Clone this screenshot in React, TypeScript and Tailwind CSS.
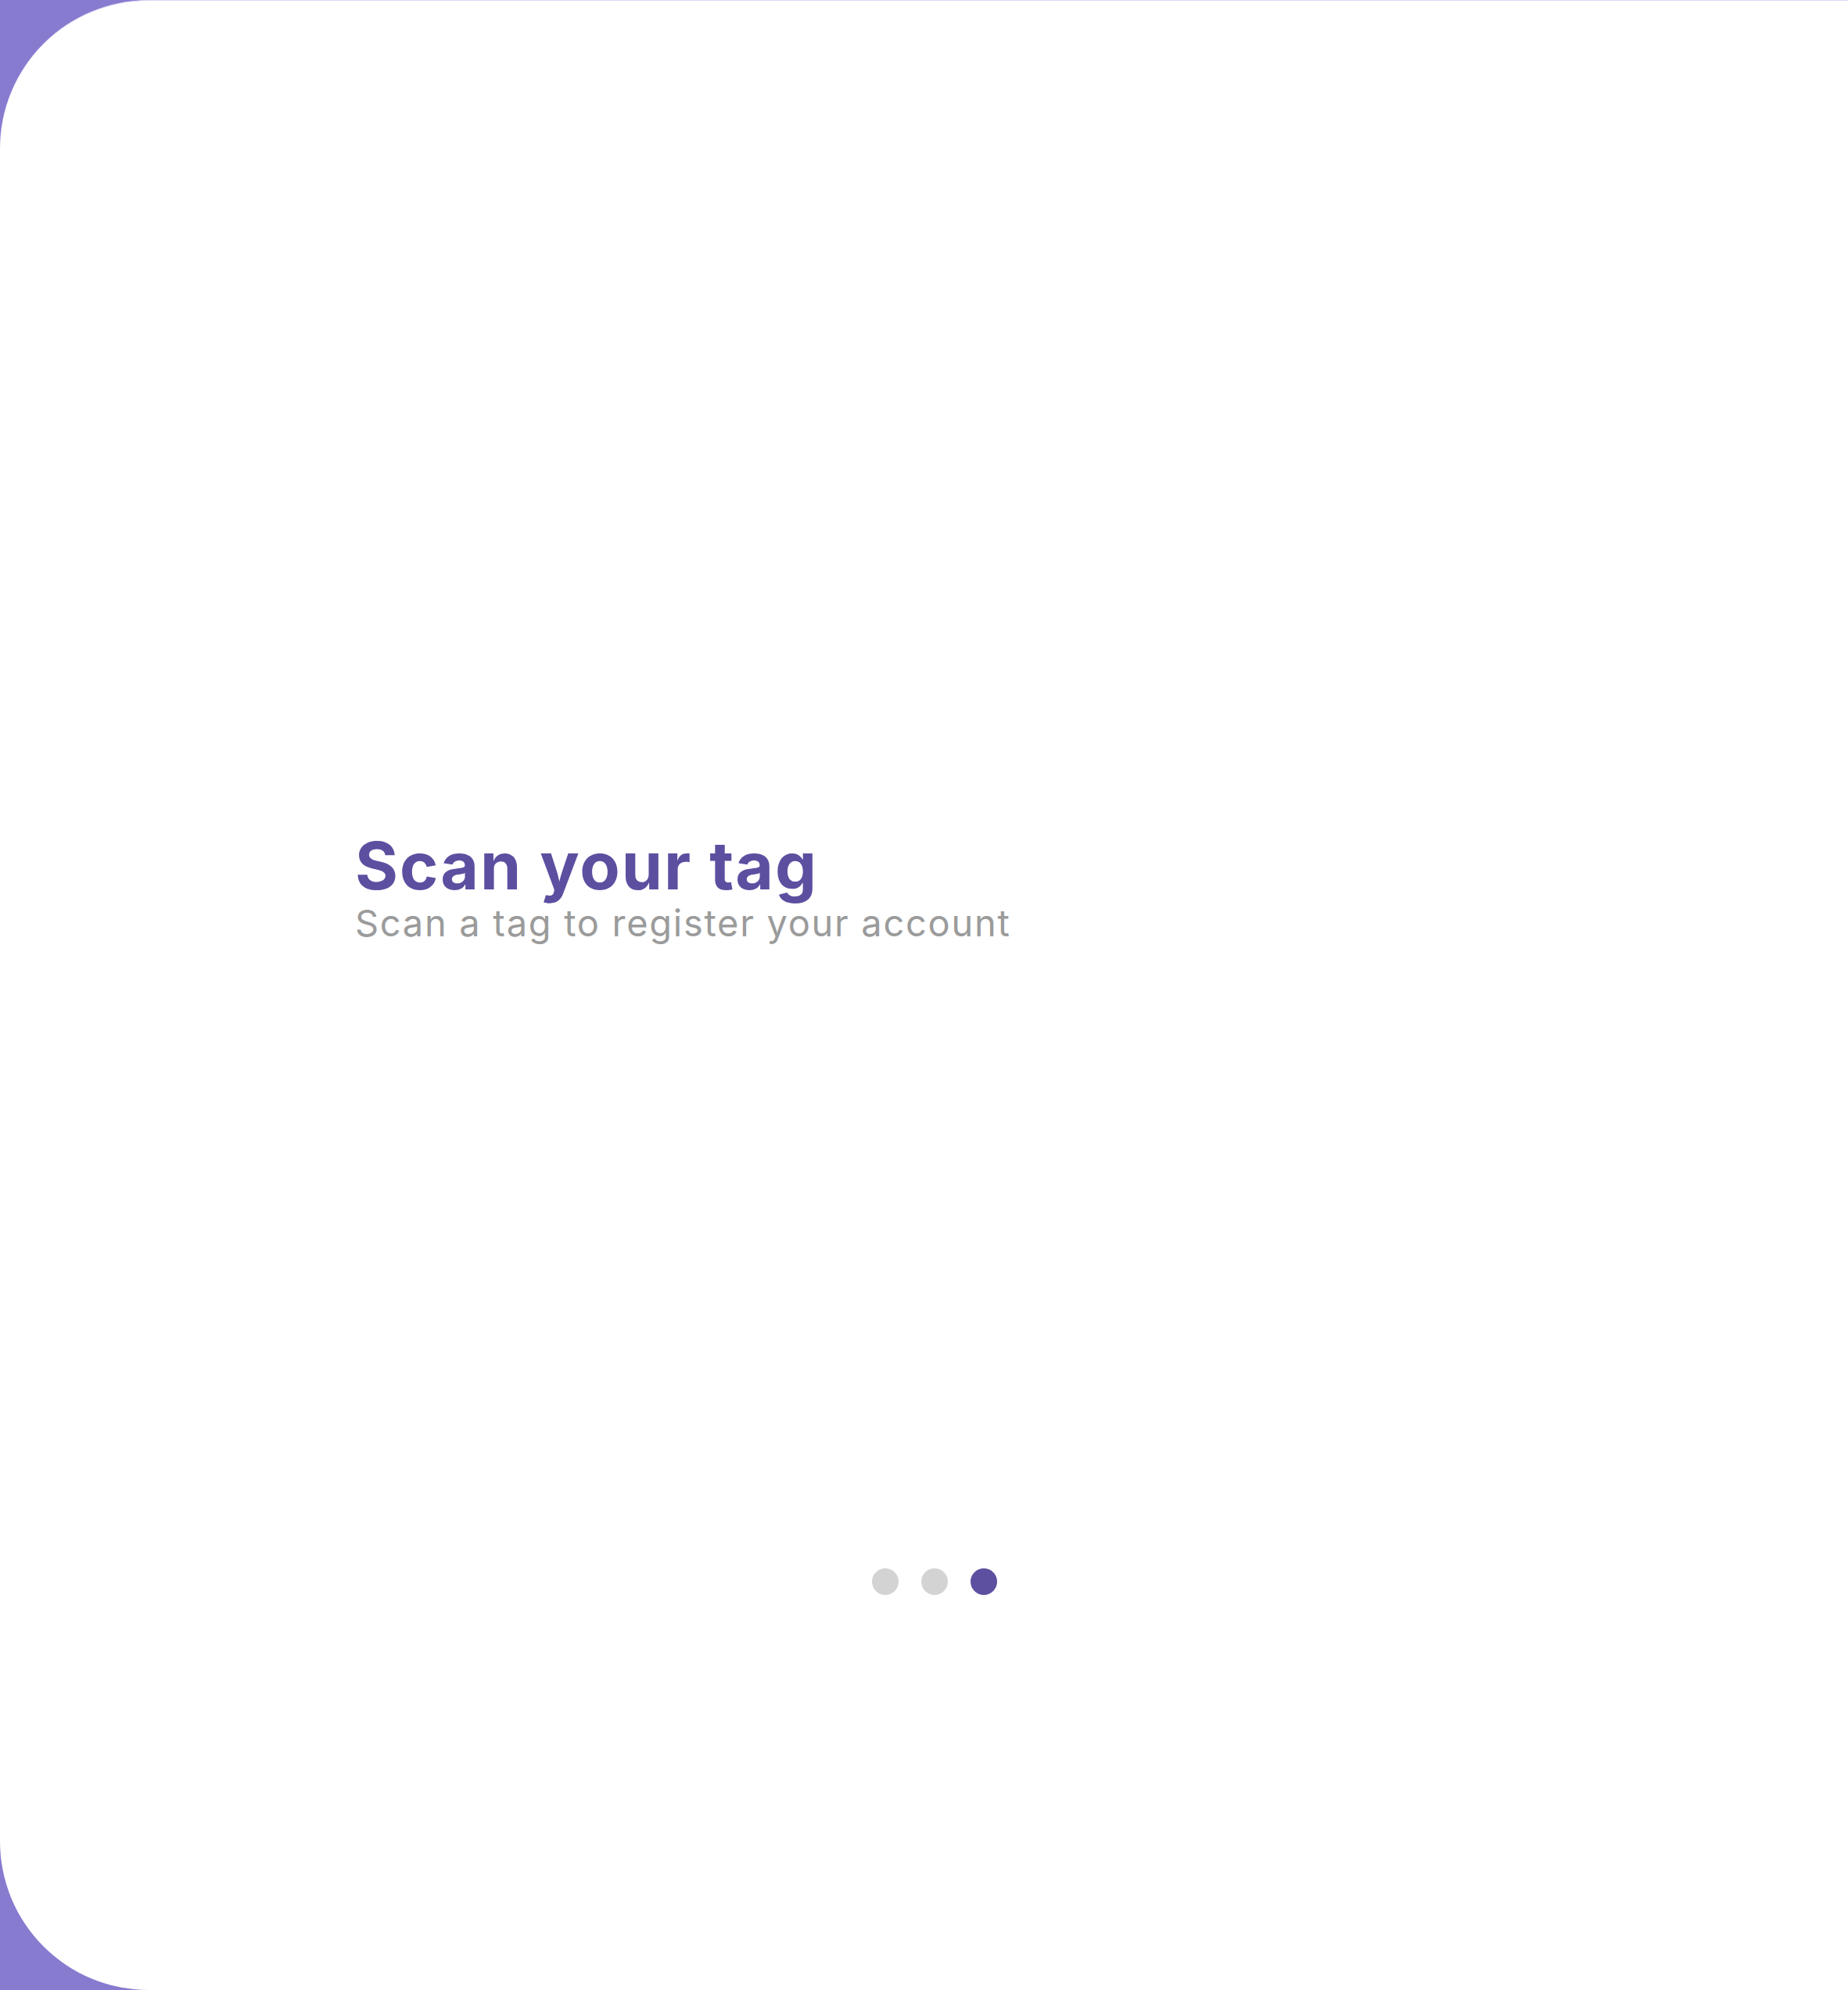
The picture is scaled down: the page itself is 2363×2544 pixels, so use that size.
export default function App() {
  const dots = [false, false, true];

  return (
    <div className="min-h-[2544px] w-full bg-[#877bd0] flex">
      <div
        className="flex-1 flex flex-col bg-white rounded-l-[190px] border-t border-[#dcd7f4]"
        style={{ fontFamily: "Inter, 'Open Sans', sans-serif" }}
      >
        <div className="pl-[454px] pt-[1064px]">
          <h1 className="text-[84px] font-bold leading-none tracking-[2px] text-[#5c4fa0]">
            Scan your tag
          </h1>
          <p className="mt-[7px] text-[47px] leading-none tracking-[1.7px] text-[#9b9b9b]">
            Scan a tag to register your account
          </p>
        </div>

        <div className="flex justify-center gap-[29px] pl-[27px] mt-[802px]">
          {dots.map((active, i) => (
            <span
              key={i}
              className={`w-[34px] h-[34px] rounded-full ${active ? "bg-[#5d50a0]" : "bg-[#d3d3d3]"}`}
            />
          ))}
        </div>
      </div>
    </div>
  );
}
